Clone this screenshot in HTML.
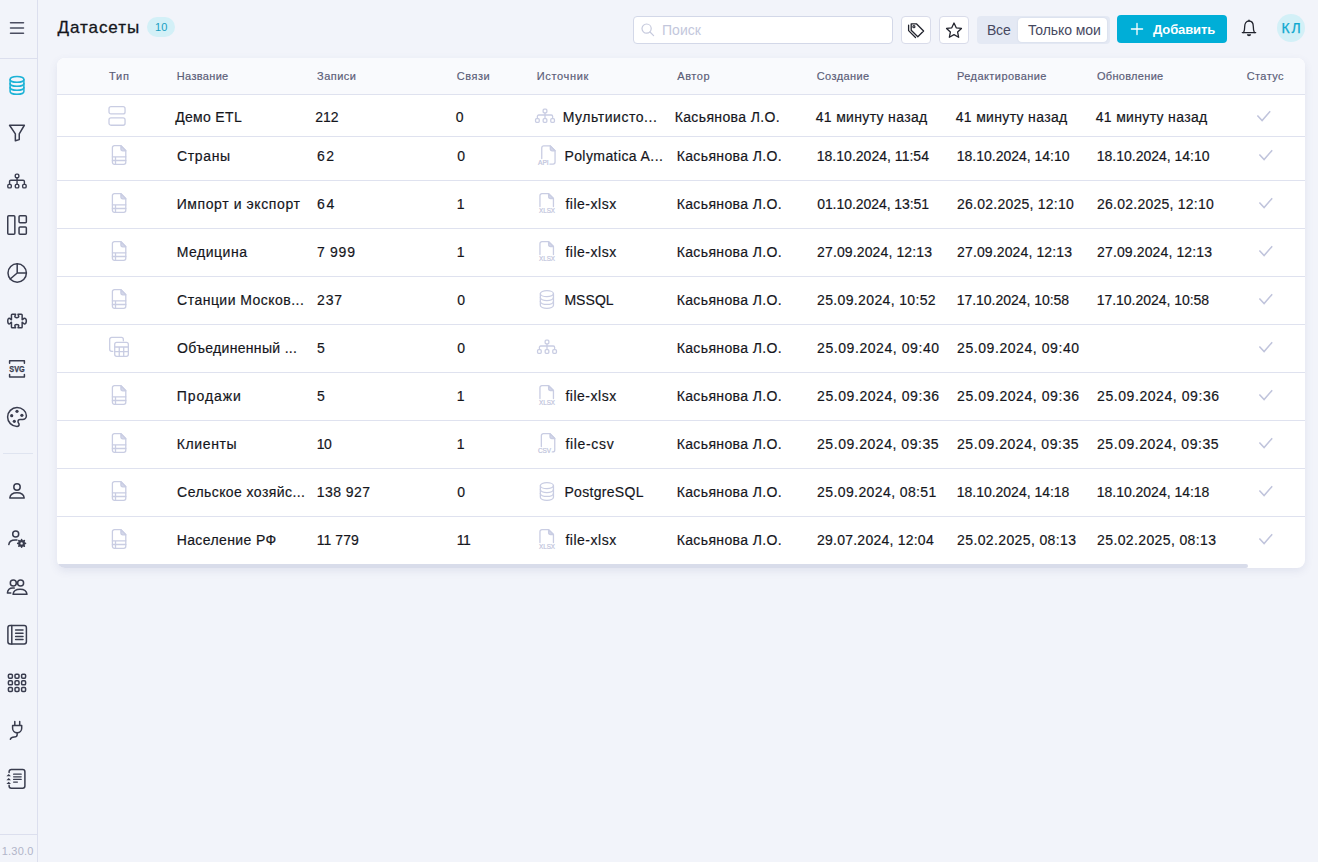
<!DOCTYPE html><html lang="ru"><head><meta charset="utf-8"><title>Датасеты</title><style>
*{box-sizing:border-box;margin:0;padding:0}
html,body{width:1318px;height:862px;overflow:hidden}
body{background:#f2f4fa;font-family:"Liberation Sans",sans-serif;color:#15161c;position:relative;font-size:14px}
.abs{position:absolute}
#side{position:absolute;left:0;top:0;width:38px;height:862px;border-right:1px solid #dcdfee;background:#f2f4fa}
#side .ln{position:absolute;height:1px;background:#dcdfee}
svg{position:absolute;overflow:visible}
.ic{fill:none;stroke:#393c4e;stroke-width:1.5;stroke-linecap:round;stroke-linejoin:round}
.x{position:absolute;white-space:nowrap;line-height:20px;height:20px}
#card .x{-webkit-text-stroke:0.18px currentColor}
.badge{position:absolute;left:147px;top:17px;width:28px;height:20px;border-radius:10px;background:#d3f0f7}
.search{position:absolute;left:633px;top:16px;width:260px;height:28px;border:1px solid #d3d8e8;border-radius:4px;background:#fff}
.btn{position:absolute;top:16px;width:30px;height:28px;border:1px solid #d9dcea;border-radius:4px;background:#fff}
.seg{position:absolute;left:977px;top:16px;width:133px;height:28px;border-radius:4px;background:#e4e9f4}
.seg .b{position:absolute;left:41px;top:2px;width:89px;height:24px;border-radius:4px;background:#fff;box-shadow:0 0 2px rgba(60,70,120,.12)}
.add{position:absolute;left:1117px;top:15px;width:110px;height:28px;border-radius:4px;background:#00aed7}
.ava{position:absolute;left:1277px;top:14px;width:28px;height:28px;border-radius:50%;background:#d3f0f7}
#card{position:absolute;left:57px;top:58px;width:1248px;height:510px;background:#fff;border-radius:8px;box-shadow:0 3px 8px rgba(80,95,150,.11);overflow:hidden}
#thead{position:absolute;left:0;top:0;width:100%;height:37px;background:#f9fafd;border-bottom:1px solid #dfe2ef}
.rl{position:absolute;left:0;width:100%;height:1px;background:#dfe2ef}
.li{fill:none;stroke:#c9cde3;stroke-width:1.3;stroke-linecap:round;stroke-linejoin:round}
.sb{position:absolute;left:0;top:506px;width:1191px;height:4px;background:#d8dcea;border-radius:0 2px 2px 4px}
</style></head><body>
<div id="side">
<div class="ln" style="left:0;top:58px;width:37px"></div>
<div class="ln" style="left:3px;top:453px;width:30px;background:#dfe4f0"></div>
<div class="ln" style="left:0;top:834px;width:37px"></div>
<svg style="left:7px;top:18px" width="20" height="20" viewBox="0 0 20 20"><path class="ic" style="stroke:#4a4d60" d="M3.5 4.7h13M3.5 10h13M3.5 15.3h13"/></svg>
<svg style="left:7px;top:75px" width="20" height="21" viewBox="0 0 20 21"><g class="ic" style="stroke:#1bb2d6"><ellipse cx="10" cy="4.400" rx="6.900" ry="2.900"/><path d="M3.100 4.400v12c0 1.600 3.100 2.900 6.900 2.900s6.900-1.300 6.900-2.900V4.400"/><path d="M3.100 8.400c0 1.600 3.100 2.900 6.900 2.900s6.900-1.300 6.900-2.900"/><path d="M3.100 12.400c0 1.600 3.100 2.900 6.900 2.900s6.900-1.300 6.900-2.900"/></g></svg>
<svg style="left:7px;top:123px" width="20" height="20" viewBox="0 0 20 20"><path class="ic" d="M2.550 2.250H17.350L12.250 10.800V16.600L8.350 17.800V10.800Z"/></svg>
<svg style="left:6px;top:171px" width="22" height="20" viewBox="0 0 22 20"><g class="ic" style="stroke-width:1.400"><rect x="9.250" y="3.100" width="3.600" height="3.600" rx="1.300"/><path d="M11.050 6.900v6M3.550 12.700V10.500a1.300 1.300 0 0 1 1.300-1.300H17.100a1.300 1.300 0 0 1 1.300 1.300V12.700"/><rect x="1.800" y="13.400" width="3.500" height="3.500" rx="1.200"/><rect x="9.300" y="13.400" width="3.500" height="3.500" rx="1.200"/><rect x="16.650" y="13.400" width="3.500" height="3.500" rx="1.200"/></g></svg>
<svg style="left:7px;top:215px" width="20" height="21" viewBox="0 0 20 21"><g class="ic"><rect x="0.750" y="0.850" width="7.100" height="18.300" rx="1"/><rect x="12.050" y="0.850" width="7.300" height="6.800" rx="1"/><rect x="12.050" y="12.050" width="7.300" height="7.100" rx="1"/></g></svg>
<svg style="left:7px;top:263px" width="20" height="20" viewBox="0 0 20 20"><g class="ic"><circle cx="10.2" cy="10" r="9.2"/><path d="M10.2 0.8V10H19.4M10.2 10L3.2 16"/></g></svg>
<svg style="left:6px;top:312px" width="22" height="18" viewBox="0 0 22 18"><path class="ic" d="M5.450 3.050a.8.8 0 0 1 .8-.8H9.600C9.600 3.200 8.850 3.400 8.850 4.300C8.850 5.200 9.700 5.700 10.800 5.700C11.900 5.700 12.750 5.200 12.750 4.300C12.750 3.400 12 3.200 12 2.250H15.350a.8.8 0 0 1 .8.800V7.750C17.100 7.750 17.300 6.150 18.300 6.150C19.500 6.150 20.350 7.400 20.350 9.050C20.350 10.700 19.500 11.950 18.300 11.950C17.300 11.950 17.100 10.350 16.150 10.350V15.050a.8.8 0 0 1-.8.800H12C12 14.900 12.750 14.700 12.750 13.800C12.750 12.900 11.900 12.400 10.800 12.400C9.700 12.400 8.850 12.900 8.850 13.800C8.850 14.700 9.600 14.900 9.600 15.850H6.250a.8.8 0 0 1-.8-.800V10.350C4.500 10.350 4.300 11.950 3.300 11.950C2.300 11.950 1.750 10.700 1.750 9.050C1.750 7.400 2.300 6.150 3.300 6.150C4.300 6.150 4.500 7.750 5.450 7.750Z"/></svg>
<svg style="left:7px;top:359px" width="20" height="20" viewBox="0 0 20 20"><path class="ic" d="M2.6 4.3V1.8h14.8v2.5M2.6 15.6v2.5h14.8v-2.5"/><text x="10" y="13.4" text-anchor="middle" font-family="Liberation Sans, sans-serif" font-weight="700" font-size="9.600" textLength="15.400" lengthAdjust="spacingAndGlyphs" fill="#393c4e" stroke="#393c4e" stroke-width="0.250">SVG</text></svg>
<svg style="left:6px;top:406px" width="22" height="22" viewBox="0 0 22 22"><path class="ic" d="M11 1.6c-5.2 0-9.4 4.2-9.4 9.4s4.2 9.4 9.4 9.4c1.4 0 2.1-.9 2.1-1.9 0-.6-.2-1-.6-1.500-.3-.4-.5-.9-.5-1.400 0-1.2.9-2.100 2.100-2.100h2.500c2.100 0 3.800-1.700 3.800-3.800C20.400 5.200 16.200 1.600 11 1.600z"/><g fill="#393c4e"><circle cx="5.700" cy="9.700" r="1.600"/><circle cx="11" cy="5.300" r="1.600"/><circle cx="15.900" cy="9.300" r="1.600"/><circle cx="8.300" cy="15.300" r="1.600"/></g></svg>
<svg style="left:7px;top:481px" width="20" height="20" viewBox="0 0 20 20"><g class="ic"><circle cx="10" cy="6" r="3.200"/><path d="M2.800 17c.400-3.300 3.300-5.200 7.200-5.200s6.800 1.900 7.200 5.200z"/></g></svg>
<svg style="left:7px;top:529px" width="20" height="20" viewBox="0 0 20 20"><g class="ic"><circle cx="8.700" cy="5" r="3"/><path d="M1.800 15.600c.300-3 2.800-4.700 6.400-4.700 .600 0 1.200.050 1.700.150"/><circle cx="14.600" cy="14.400" r="2.300" style="stroke-width:2.200"/><path style="stroke-width:1.600" d="M14.600 10.500v1M14.600 17.300v1M10.700 14.400h1M17.500 14.400h1M11.850 11.650l.7.700M16.650 16.450l.7.700M11.850 17.150l.7-.7M16.650 12.350l.7-.7"/></g></svg>
<svg style="left:6px;top:578px" width="22" height="18" viewBox="0 0 22 18"><g class="ic"><circle cx="7.300" cy="5" r="3"/><circle cx="14.600" cy="5" r="3"/><path d="M7 16.300c.400-3.200 3-5 7.100-5s6.500 1.800 6.900 5z"/><path d="M8.200 10.100c-.500-.100-1-.150-1.500-.150-3.200 0-5 1.800-5.300 5h3.400"/></g></svg>
<svg style="left:7px;top:624px" width="20" height="22" viewBox="0 0 20 22"><g class="ic"><rect x="0.900" y="1.500" width="18.500" height="18.500" rx="2.200"/><path d="M4.800 1.500v18.500M8.600 6h7.400M8.600 9.200h7.400M8.600 12.400h7.400M8.600 15.600h7.400"/></g></svg>
<svg style="left:7px;top:673px" width="20" height="20" viewBox="0 0 20 20"><g class="ic"><rect x="1.4" y="1.2" width="4" height="4" rx="1.100"/><rect x="8.0" y="1.2" width="4" height="4" rx="1.100"/><rect x="14.6" y="1.2" width="4" height="4" rx="1.100"/><rect x="1.4" y="7.8" width="4" height="4" rx="1.100"/><rect x="8.0" y="7.8" width="4" height="4" rx="1.100"/><rect x="14.6" y="7.8" width="4" height="4" rx="1.100"/><rect x="1.4" y="14.4" width="4" height="4" rx="1.100"/><rect x="8.0" y="14.4" width="4" height="4" rx="1.100"/><rect x="14.6" y="14.4" width="4" height="4" rx="1.100"/></g></svg>
<svg style="left:7px;top:718px" width="20" height="24" viewBox="0 0 20 24"><g class="ic"><path d="M7.800 3.600v3.600M12.700 3.600v3.600"/><path d="M5.600 7.500H14.700V10.300a4.550 4.550 0 0 1-9.100 0Z"/><path d="M10.150 14.850v1.800c0 1.700-1.300 2.300-3 2.300s-3.200.500-3.800 2.300"/></g></svg>
<svg style="left:6px;top:768px" width="22" height="22" viewBox="0 0 22 22"><g class="ic"><path d="M3.100 4.600V3.700a2.200 2.200 0 0 1 2.200-2.200H16.700a2.200 2.200 0 0 1 2.200 2.200V18.100a2.200 2.200 0 0 1-2.200 2.200H5.300a2.200 2.200 0 0 1-2.200-2.200V17.300"/><path style="stroke-width:1.250" d="M7.600 6.200h7.600M7.600 8.800h7.600M7.600 11.400h7.600M7.600 14h3.800"/></g><g fill="#393c4e"><path d="M0.400 8.300l2.300-2.300 2.300 2.300zM0.400 12.200l2.300-2.300 2.300 2.300zM0.400 16.100l2.300-2.300 2.300 2.300z"/></g></svg>
<div class="x" style="left:1.75px;top:841.19px;font-size:11px;color:#b1b5c9;letter-spacing:0.196px">1.30.0</div>
</div>
<div class="x" style="left:57.44px;top:17.61px;font-size:17px;color:#15161c;letter-spacing:0.956px;-webkit-text-stroke:0.3px #15161c">Датасеты</div>
<div class="badge"></div>
<div class="x" style="left:155.02px;top:16.99px;font-size:11px;color:#1a9fc2;letter-spacing:0.051px">10</div>
<div class="search"><svg style="left:7.2px;top:6.2px" width="14" height="14" viewBox="0 0 14 14"><circle cx="5.6" cy="5.6" r="4.6" fill="none" stroke="#c6cadd" stroke-width="1.2"/><path d="M9 9L12.6 12.6" stroke="#c6cadd" stroke-width="1.2" stroke-linecap="round"/></svg></div>
<div class="x" style="left:662.00px;top:20.15px;font-size:14px;color:#c3c7dc;letter-spacing:0.036px">Поиск</div>
<div class="btn" style="left:901px"><svg style="left:3.8px;top:4px" width="20" height="20" viewBox="0 0 20 20"><g fill="none" stroke="#22242e" stroke-width="1.300" stroke-linejoin="round" stroke-linecap="round"><path d="M5.200 2.800h5.200l7.200 7.200-5.800 5.800-6.600-6.600z"/><path d="M2.600 4.200v5.400l6.900 6.900"/><circle cx="7.900" cy="5.700" r="1.050" stroke-width="1.100"/></g></svg></div>
<div class="btn" style="left:939px"><svg style="left:4px;top:3px" width="20" height="20" viewBox="0 0 20 20"><path transform="translate(10 10.500) scale(.93) translate(-10 -10.300)" d="M10 2.200l2.400 5.200 5.600.700-4.100 3.900 1.100 5.600-5-2.800-5 2.800 1.100-5.600-4.100-3.900 5.600-.700z" fill="none" stroke="#22242e" stroke-width="1.400" stroke-linejoin="round"/></svg></div>
<div class="seg"><div class="b"></div></div>
<div class="x" style="left:987.00px;top:20.15px;font-size:14px;color:#46485f;letter-spacing:-0.220px">Все</div>
<div class="x" style="left:1027.90px;top:20.15px;font-size:14px;color:#46485f;letter-spacing:-0.074px">Только мои</div>
<div class="add"><svg style="left:14px;top:8px" width="12" height="12" viewBox="0 0 12 12"><path d="M6 0.4v11.2M0.4 6h11.2" stroke="#fff" stroke-width="1.3" stroke-linecap="round"/></svg></div>
<div class="x" style="left:1153.06px;top:19.50px;font-size:13px;color:#ffffff;letter-spacing:-0.118px;font-weight:700">Добавить</div>
<svg style="left:1239px;top:18px" width="20" height="20" viewBox="0 0 20 20"><g fill="none" stroke="#22242e" stroke-width="1.300" stroke-linecap="round" stroke-linejoin="round"><path d="M4.600 14.600c.900-2 1.100-4 1.100-6.200c0-3 1.600-5.400 4.300-5.400s4.300 2.400 4.300 5.400c0 2.200.200 4.200 1.100 6.200"/><path d="M3.300 14.600H16.700M10 2.100v.800"/></g><path d="M7.900 16.300h4.200a2.100 1.900 0 0 1-4.200 0z" fill="#22242e"/></svg>
<div class="ava"></div>
<div class="x" style="left:1281.38px;top:18.15px;font-size:14px;color:#0da8cf;letter-spacing:1.922px;-webkit-text-stroke:0.25px #0da8cf">КЛ</div>
<div id="card"><div id="thead"></div>
<div class="x" style="left:52.08px;top:8.29px;font-size:11px;color:#5b5d78;letter-spacing:0.733px">Тип</div>
<div class="x" style="left:119.86px;top:8.29px;font-size:11px;color:#5b5d78;letter-spacing:0.316px">Название</div>
<div class="x" style="left:260.11px;top:8.29px;font-size:11px;color:#5b5d78;letter-spacing:0.437px">Записи</div>
<div class="x" style="left:399.86px;top:8.29px;font-size:11px;color:#5b5d78;letter-spacing:0.519px">Связи</div>
<div class="x" style="left:479.77px;top:8.29px;font-size:11px;color:#5b5d78;letter-spacing:0.665px">Источник</div>
<div class="x" style="left:620.27px;top:8.29px;font-size:11px;color:#5b5d78;letter-spacing:0.542px">Автор</div>
<div class="x" style="left:759.78px;top:8.29px;font-size:11px;color:#5b5d78;letter-spacing:0.406px">Создание</div>
<div class="x" style="left:899.91px;top:8.29px;font-size:11px;color:#5b5d78;letter-spacing:0.443px">Редактирование</div>
<div class="x" style="left:1039.92px;top:8.29px;font-size:11px;color:#5b5d78;letter-spacing:0.311px">Обновление</div>
<div class="x" style="left:1189.64px;top:8.29px;font-size:11px;color:#5b5d78;letter-spacing:0.430px">Статус</div>
<div class="rl" style="top:78px"></div>
<div class="rl" style="top:122px"></div>
<div class="rl" style="top:170px"></div>
<div class="rl" style="top:218px"></div>
<div class="rl" style="top:266px"></div>
<div class="rl" style="top:314px"></div>
<div class="rl" style="top:362px"></div>
<div class="rl" style="top:410px"></div>
<div class="rl" style="top:458px"></div>
<svg style="left:51px;top:47px" width="18" height="22" viewBox="0 0 18 22"><g class="li"><rect x="1" y="1.65" width="16.05" height="7.3" rx="2"/><rect x="1" y="12.85" width="16.05" height="7.4" rx="2"/></g></svg>
<div class="x" style="left:118.14px;top:49.05px;font-size:14px;color:#15161c;letter-spacing:0.329px">Демо ETL</div>
<div class="x" style="left:258.36px;top:49.05px;font-size:14px;color:#15161c;letter-spacing:-0.149px">212</div>
<div class="x" style="left:398.63px;top:49.05px;font-size:14px;color:#15161c;letter-spacing:0.000px">0</div>
<div class="x" style="left:505.70px;top:49.05px;font-size:14px;color:#15161c;letter-spacing:0.543px">Мультиисто...</div>
<div class="x" style="left:617.68px;top:49.05px;font-size:14px;color:#15161c;letter-spacing:0.369px">Касьянова Л.О.</div>
<div class="x" style="left:758.67px;top:49.05px;font-size:14px;color:#15161c;letter-spacing:0.337px">41 минуту назад</div>
<div class="x" style="left:898.67px;top:49.05px;font-size:14px;color:#15161c;letter-spacing:0.337px">41 минуту назад</div>
<div class="x" style="left:1038.67px;top:49.05px;font-size:14px;color:#15161c;letter-spacing:0.337px">41 минуту назад</div>
<svg style="left:477px;top:50px" width="22" height="18" viewBox="0 0 22 18"><g class="li"><rect x="9.15" y="1.15" width="3.7" height="3.7" rx="1"/><path d="M11 5v5M3.4 9.6V8.3a1.3 1.3 0 0 1 1.300-1.300h12.600a1.300 1.300 0 0 1 1.300 1.300v1.300"/><rect x="1.550" y="10.650" width="3.700" height="3.700" rx="1"/><rect x="9.150" y="10.650" width="3.700" height="3.700" rx="1"/><rect x="16.750" y="10.650" width="3.700" height="3.700" rx="1"/></g></svg>
<svg style="left:1197px;top:51px" width="18" height="14" viewBox="0 0 18 14"><path d="M3.400 6.400L8.100 11.600L16.200 2.200" fill="none" stroke="#c0c4dc" stroke-width="1.500" stroke-linejoin="miter"/></svg>
<svg style="left:54px;top:87px" width="16" height="20" viewBox="0 0 16 20"><path class="li" d="M3.4 0.6h6.5l4.9 5.2v11.5a2 2 0 0 1-2 2h-9.4a2 2 0 0 1-2-2v-14.7a2 2 0 0 1 2-2z"/><path class="li" style="fill:#d5d8ea" d="M9.9 0.6v3.2a2 2 0 0 0 2 2h2.9z"/><path class="li" d="M1.4 11.8h13.4M1.4 15.5h13.4M4.5 11.8v7.5"/></svg>
<div class="x" style="left:120.11px;top:88.05px;font-size:14px;color:#15161c;letter-spacing:0.607px">Страны</div>
<div class="x" style="left:260.11px;top:88.05px;font-size:14px;color:#15161c;letter-spacing:1.451px">62</div>
<div class="x" style="left:400.16px;top:88.05px;font-size:14px;color:#15161c;letter-spacing:0.000px">0</div>
<div class="x" style="left:507.41px;top:88.05px;font-size:14px;color:#15161c;letter-spacing:0.420px">Polymatica A...</div>
<div class="x" style="left:619.68px;top:88.05px;font-size:14px;color:#15161c;letter-spacing:0.369px">Касьянова Л.О.</div>
<div class="x" style="left:759.75px;top:88.05px;font-size:14px;color:#15161c;letter-spacing:0.023px">18.10.2024, 11:54</div>
<div class="x" style="left:899.75px;top:88.05px;font-size:14px;color:#15161c;letter-spacing:-0.008px">18.10.2024, 14:10</div>
<div class="x" style="left:1039.75px;top:88.05px;font-size:14px;color:#15161c;letter-spacing:-0.008px">18.10.2024, 14:10</div>
<svg style="left:481px;top:86px" width="18" height="22" viewBox="0 0 18 22"><path class="li" d="M3.750 14.500V3.950a2 2 0 0 1 2-2H12.300L17.050 6.800V18.050a2 2 0 0 1-2 2H11.900"/><path class="li" style="fill:#d5d8ea" d="M12.300 1.950V4.800a2 2 0 0 0 2 2H17.050z"/><text x="0.100" y="20.700" textLength="10.600" font-family="Liberation Sans, sans-serif" font-size="6.3" fill="#c0c4dc" stroke="#c0c4dc" stroke-width="0.2" lengthAdjust="spacingAndGlyphs">API</text></svg>
<svg style="left:1199px;top:90px" width="18" height="14" viewBox="0 0 18 14"><path d="M3.400 6.400L8.100 11.600L16.200 2.200" fill="none" stroke="#c0c4dc" stroke-width="1.500" stroke-linejoin="miter"/></svg>
<svg style="left:54px;top:135px" width="16" height="20" viewBox="0 0 16 20"><path class="li" d="M3.4 0.6h6.5l4.9 5.2v11.5a2 2 0 0 1-2 2h-9.4a2 2 0 0 1-2-2v-14.7a2 2 0 0 1 2-2z"/><path class="li" style="fill:#d5d8ea" d="M9.9 0.6v3.2a2 2 0 0 0 2 2h2.9z"/><path class="li" d="M1.4 11.8h13.4M1.4 15.5h13.4M4.5 11.8v7.5"/></svg>
<div class="x" style="left:119.68px;top:136.05px;font-size:14px;color:#15161c;letter-spacing:0.599px">Импорт и экспорт</div>
<div class="x" style="left:260.11px;top:136.05px;font-size:14px;color:#15161c;letter-spacing:1.682px">64</div>
<div class="x" style="left:399.75px;top:136.05px;font-size:14px;color:#15161c;letter-spacing:0.000px">1</div>
<div class="x" style="left:508.39px;top:136.05px;font-size:14px;color:#15161c;letter-spacing:0.525px">file-xlsx</div>
<div class="x" style="left:619.68px;top:136.05px;font-size:14px;color:#15161c;letter-spacing:0.369px">Касьянова Л.О.</div>
<div class="x" style="left:760.16px;top:136.05px;font-size:14px;color:#15161c;letter-spacing:-0.059px">01.10.2024, 13:51</div>
<div class="x" style="left:900.05px;top:136.05px;font-size:14px;color:#15161c;letter-spacing:0.241px">26.02.2025, 12:10</div>
<div class="x" style="left:1040.05px;top:136.05px;font-size:14px;color:#15161c;letter-spacing:0.241px">26.02.2025, 12:10</div>
<svg style="left:481px;top:134px" width="18" height="22" viewBox="0 0 18 22"><path class="li" d="M1.950 14.600V3.650a2 2 0 0 1 2-2H10.600L15.450 6.500V14.600"/><path class="li" style="fill:#d5d8ea" d="M10.600 1.650V4.500a2 2 0 0 0 2 2H15.450z"/><text x="1" y="20.800" textLength="16" font-family="Liberation Sans, sans-serif" font-size="6.3" fill="#c0c4dc" stroke="#c0c4dc" stroke-width="0.2" lengthAdjust="spacingAndGlyphs">XLSX</text></svg>
<svg style="left:1199px;top:138px" width="18" height="14" viewBox="0 0 18 14"><path d="M3.400 6.400L8.100 11.600L16.200 2.200" fill="none" stroke="#c0c4dc" stroke-width="1.500" stroke-linejoin="miter"/></svg>
<svg style="left:54px;top:183px" width="16" height="20" viewBox="0 0 16 20"><path class="li" d="M3.4 0.6h6.5l4.9 5.2v11.5a2 2 0 0 1-2 2h-9.4a2 2 0 0 1-2-2v-14.7a2 2 0 0 1 2-2z"/><path class="li" style="fill:#d5d8ea" d="M9.9 0.6v3.2a2 2 0 0 0 2 2h2.9z"/><path class="li" d="M1.4 11.8h13.4M1.4 15.5h13.4M4.5 11.8v7.5"/></svg>
<div class="x" style="left:119.68px;top:184.05px;font-size:14px;color:#15161c;letter-spacing:0.518px">Медицина</div>
<div class="x" style="left:260.00px;top:184.05px;font-size:14px;color:#15161c;letter-spacing:0.720px">7 999</div>
<div class="x" style="left:399.75px;top:184.05px;font-size:14px;color:#15161c;letter-spacing:0.000px">1</div>
<div class="x" style="left:508.39px;top:184.05px;font-size:14px;color:#15161c;letter-spacing:0.525px">file-xlsx</div>
<div class="x" style="left:619.68px;top:184.05px;font-size:14px;color:#15161c;letter-spacing:0.369px">Касьянова Л.О.</div>
<div class="x" style="left:760.05px;top:184.05px;font-size:14px;color:#15161c;letter-spacing:0.130px">27.09.2024, 12:13</div>
<div class="x" style="left:900.05px;top:184.05px;font-size:14px;color:#15161c;letter-spacing:0.130px">27.09.2024, 12:13</div>
<div class="x" style="left:1040.05px;top:184.05px;font-size:14px;color:#15161c;letter-spacing:0.130px">27.09.2024, 12:13</div>
<svg style="left:481px;top:182px" width="18" height="22" viewBox="0 0 18 22"><path class="li" d="M1.950 14.600V3.650a2 2 0 0 1 2-2H10.600L15.450 6.500V14.600"/><path class="li" style="fill:#d5d8ea" d="M10.600 1.650V4.500a2 2 0 0 0 2 2H15.450z"/><text x="1" y="20.800" textLength="16" font-family="Liberation Sans, sans-serif" font-size="6.3" fill="#c0c4dc" stroke="#c0c4dc" stroke-width="0.2" lengthAdjust="spacingAndGlyphs">XLSX</text></svg>
<svg style="left:1199px;top:186px" width="18" height="14" viewBox="0 0 18 14"><path d="M3.400 6.400L8.100 11.600L16.200 2.200" fill="none" stroke="#c0c4dc" stroke-width="1.500" stroke-linejoin="miter"/></svg>
<svg style="left:54px;top:231px" width="16" height="20" viewBox="0 0 16 20"><path class="li" d="M3.4 0.6h6.5l4.9 5.2v11.5a2 2 0 0 1-2 2h-9.4a2 2 0 0 1-2-2v-14.7a2 2 0 0 1 2-2z"/><path class="li" style="fill:#d5d8ea" d="M9.9 0.6v3.2a2 2 0 0 0 2 2h2.9z"/><path class="li" d="M1.4 11.8h13.4M1.4 15.5h13.4M4.5 11.8v7.5"/></svg>
<div class="x" style="left:120.11px;top:232.05px;font-size:14px;color:#15161c;letter-spacing:0.471px">Станции Москов...</div>
<div class="x" style="left:260.05px;top:232.05px;font-size:14px;color:#15161c;letter-spacing:0.862px">237</div>
<div class="x" style="left:400.16px;top:232.05px;font-size:14px;color:#15161c;letter-spacing:0.000px">0</div>
<div class="x" style="left:507.41px;top:232.05px;font-size:14px;color:#15161c;letter-spacing:0.046px">MSSQL</div>
<div class="x" style="left:619.68px;top:232.05px;font-size:14px;color:#15161c;letter-spacing:0.369px">Касьянова Л.О.</div>
<div class="x" style="left:760.05px;top:232.05px;font-size:14px;color:#15161c;letter-spacing:0.357px">25.09.2024, 10:52</div>
<div class="x" style="left:899.75px;top:232.05px;font-size:14px;color:#15161c;letter-spacing:-0.037px">17.10.2024, 10:58</div>
<div class="x" style="left:1039.75px;top:232.05px;font-size:14px;color:#15161c;letter-spacing:-0.037px">17.10.2024, 10:58</div>
<svg style="left:481px;top:230px" width="18" height="24" viewBox="0 0 18 24"><g class="li"><ellipse cx="8.900" cy="5.650" rx="6.550" ry="3"/><path d="M2.350 5.650V17.350c0 1.660 2.930 3 6.550 3s6.550-1.340 6.550-3V5.650"/><path d="M2.350 9.550c0 1.660 2.930 3 6.550 3s6.550-1.340 6.550-3"/><path d="M2.350 13.450c0 1.660 2.930 3 6.550 3s6.550-1.340 6.550-3"/></g></svg>
<svg style="left:1199px;top:234px" width="18" height="14" viewBox="0 0 18 14"><path d="M3.400 6.400L8.100 11.600L16.200 2.200" fill="none" stroke="#c0c4dc" stroke-width="1.500" stroke-linejoin="miter"/></svg>
<svg style="left:51px;top:278px" width="22" height="22" viewBox="0 0 22 22"><g class="li"><path d="M4.8 15.35H3.7a2 2 0 0 1-2-2V3.45a2 2 0 0 1 2-2h9.65a2 2 0 0 1 2 2V4.8"/><rect x="6.7" y="6.45" width="13.65" height="13.9" rx="2"/><path d="M6.7 11H20.35M6.7 15.7H20.35M11.26 11v9.35M15.7 11v9.35"/></g></svg>
<div class="x" style="left:120.09px;top:280.05px;font-size:14px;color:#15161c;letter-spacing:0.320px">Объединенный ...</div>
<div class="x" style="left:259.88px;top:280.05px;font-size:14px;color:#15161c;letter-spacing:0.000px">5</div>
<div class="x" style="left:400.16px;top:280.05px;font-size:14px;color:#15161c;letter-spacing:0.000px">0</div>
<div class="x" style="left:619.68px;top:280.05px;font-size:14px;color:#15161c;letter-spacing:0.369px">Касьянова Л.О.</div>
<div class="x" style="left:760.05px;top:280.05px;font-size:14px;color:#15161c;letter-spacing:0.568px">25.09.2024, 09:40</div>
<div class="x" style="left:900.05px;top:280.05px;font-size:14px;color:#15161c;letter-spacing:0.568px">25.09.2024, 09:40</div>
<svg style="left:479px;top:281px" width="22" height="18" viewBox="0 0 22 18"><g class="li"><rect x="9.15" y="1.15" width="3.7" height="3.7" rx="1"/><path d="M11 5v5M3.4 9.6V8.3a1.3 1.3 0 0 1 1.300-1.300h12.600a1.300 1.300 0 0 1 1.300 1.300v1.300"/><rect x="1.550" y="10.650" width="3.700" height="3.700" rx="1"/><rect x="9.150" y="10.650" width="3.700" height="3.700" rx="1"/><rect x="16.750" y="10.650" width="3.700" height="3.700" rx="1"/></g></svg>
<svg style="left:1199px;top:282px" width="18" height="14" viewBox="0 0 18 14"><path d="M3.400 6.400L8.100 11.600L16.200 2.200" fill="none" stroke="#c0c4dc" stroke-width="1.500" stroke-linejoin="miter"/></svg>
<svg style="left:54px;top:327px" width="16" height="20" viewBox="0 0 16 20"><path class="li" d="M3.4 0.6h6.5l4.9 5.2v11.5a2 2 0 0 1-2 2h-9.4a2 2 0 0 1-2-2v-14.7a2 2 0 0 1 2-2z"/><path class="li" style="fill:#d5d8ea" d="M9.9 0.6v3.2a2 2 0 0 0 2 2h2.9z"/><path class="li" d="M1.4 11.8h13.4M1.4 15.5h13.4M4.5 11.8v7.5"/></svg>
<div class="x" style="left:119.70px;top:328.05px;font-size:14px;color:#15161c;letter-spacing:0.959px">Продажи</div>
<div class="x" style="left:259.88px;top:328.05px;font-size:14px;color:#15161c;letter-spacing:0.000px">5</div>
<div class="x" style="left:399.75px;top:328.05px;font-size:14px;color:#15161c;letter-spacing:0.000px">1</div>
<div class="x" style="left:508.39px;top:328.05px;font-size:14px;color:#15161c;letter-spacing:0.525px">file-xlsx</div>
<div class="x" style="left:619.68px;top:328.05px;font-size:14px;color:#15161c;letter-spacing:0.369px">Касьянова Л.О.</div>
<div class="x" style="left:760.05px;top:328.05px;font-size:14px;color:#15161c;letter-spacing:0.568px">25.09.2024, 09:36</div>
<div class="x" style="left:900.05px;top:328.05px;font-size:14px;color:#15161c;letter-spacing:0.568px">25.09.2024, 09:36</div>
<div class="x" style="left:1040.05px;top:328.05px;font-size:14px;color:#15161c;letter-spacing:0.568px">25.09.2024, 09:36</div>
<svg style="left:481px;top:326px" width="18" height="22" viewBox="0 0 18 22"><path class="li" d="M1.950 14.600V3.650a2 2 0 0 1 2-2H10.600L15.450 6.500V14.600"/><path class="li" style="fill:#d5d8ea" d="M10.600 1.650V4.500a2 2 0 0 0 2 2H15.450z"/><text x="1" y="20.800" textLength="16" font-family="Liberation Sans, sans-serif" font-size="6.3" fill="#c0c4dc" stroke="#c0c4dc" stroke-width="0.2" lengthAdjust="spacingAndGlyphs">XLSX</text></svg>
<svg style="left:1199px;top:330px" width="18" height="14" viewBox="0 0 18 14"><path d="M3.400 6.400L8.100 11.600L16.200 2.200" fill="none" stroke="#c0c4dc" stroke-width="1.500" stroke-linejoin="miter"/></svg>
<svg style="left:54px;top:375px" width="16" height="20" viewBox="0 0 16 20"><path class="li" d="M3.4 0.6h6.5l4.9 5.2v11.5a2 2 0 0 1-2 2h-9.4a2 2 0 0 1-2-2v-14.7a2 2 0 0 1 2-2z"/><path class="li" style="fill:#d5d8ea" d="M9.9 0.6v3.2a2 2 0 0 0 2 2h2.9z"/><path class="li" d="M1.4 11.8h13.4M1.4 15.5h13.4M4.5 11.8v7.5"/></svg>
<div class="x" style="left:119.68px;top:376.05px;font-size:14px;color:#15161c;letter-spacing:0.641px">Клиенты</div>
<div class="x" style="left:259.75px;top:376.05px;font-size:14px;color:#15161c;letter-spacing:-0.550px">10</div>
<div class="x" style="left:399.75px;top:376.05px;font-size:14px;color:#15161c;letter-spacing:0.000px">1</div>
<div class="x" style="left:508.39px;top:376.05px;font-size:14px;color:#15161c;letter-spacing:0.684px">file-csv</div>
<div class="x" style="left:619.68px;top:376.05px;font-size:14px;color:#15161c;letter-spacing:0.369px">Касьянова Л.О.</div>
<div class="x" style="left:760.05px;top:376.05px;font-size:14px;color:#15161c;letter-spacing:0.540px">25.09.2024, 09:35</div>
<div class="x" style="left:900.05px;top:376.05px;font-size:14px;color:#15161c;letter-spacing:0.540px">25.09.2024, 09:35</div>
<div class="x" style="left:1040.05px;top:376.05px;font-size:14px;color:#15161c;letter-spacing:0.540px">25.09.2024, 09:35</div>
<svg style="left:481px;top:374px" width="18" height="22" viewBox="0 0 18 22"><path class="li" d="M3.350 14.600V3.650a2 2 0 0 1 2-2H12L16.750 6.500V17.950a2 2 0 0 1-2 2H14.300"/><path class="li" style="fill:#d5d8ea" d="M12 1.650V4.500a2 2 0 0 0 2 2H16.750z"/><text x="-0.100" y="20.800" textLength="13.200" font-family="Liberation Sans, sans-serif" font-size="6.3" fill="#c0c4dc" stroke="#c0c4dc" stroke-width="0.2" lengthAdjust="spacingAndGlyphs">CSV</text></svg>
<svg style="left:1199px;top:378px" width="18" height="14" viewBox="0 0 18 14"><path d="M3.400 6.400L8.100 11.600L16.200 2.200" fill="none" stroke="#c0c4dc" stroke-width="1.500" stroke-linejoin="miter"/></svg>
<svg style="left:54px;top:423px" width="16" height="20" viewBox="0 0 16 20"><path class="li" d="M3.4 0.6h6.5l4.9 5.2v11.5a2 2 0 0 1-2 2h-9.4a2 2 0 0 1-2-2v-14.7a2 2 0 0 1 2-2z"/><path class="li" style="fill:#d5d8ea" d="M9.9 0.6v3.2a2 2 0 0 0 2 2h2.9z"/><path class="li" d="M1.4 11.8h13.4M1.4 15.5h13.4M4.5 11.8v7.5"/></svg>
<div class="x" style="left:120.11px;top:424.05px;font-size:14px;color:#15161c;letter-spacing:0.428px">Сельское хозяйс...</div>
<div class="x" style="left:259.75px;top:424.05px;font-size:14px;color:#15161c;letter-spacing:0.435px">138 927</div>
<div class="x" style="left:400.16px;top:424.05px;font-size:14px;color:#15161c;letter-spacing:0.000px">0</div>
<div class="x" style="left:507.41px;top:424.05px;font-size:14px;color:#15161c;letter-spacing:0.309px">PostgreSQL</div>
<div class="x" style="left:619.68px;top:424.05px;font-size:14px;color:#15161c;letter-spacing:0.369px">Касьянова Л.О.</div>
<div class="x" style="left:760.05px;top:424.05px;font-size:14px;color:#15161c;letter-spacing:0.401px">25.09.2024, 08:51</div>
<div class="x" style="left:899.75px;top:424.05px;font-size:14px;color:#15161c;letter-spacing:-0.017px">18.10.2024, 14:18</div>
<div class="x" style="left:1039.75px;top:424.05px;font-size:14px;color:#15161c;letter-spacing:-0.017px">18.10.2024, 14:18</div>
<svg style="left:481px;top:422px" width="18" height="24" viewBox="0 0 18 24"><g class="li"><ellipse cx="8.900" cy="5.650" rx="6.550" ry="3"/><path d="M2.350 5.650V17.350c0 1.660 2.930 3 6.550 3s6.550-1.340 6.550-3V5.650"/><path d="M2.350 9.550c0 1.660 2.930 3 6.550 3s6.550-1.340 6.550-3"/><path d="M2.350 13.450c0 1.660 2.930 3 6.550 3s6.550-1.340 6.550-3"/></g></svg>
<svg style="left:1199px;top:426px" width="18" height="14" viewBox="0 0 18 14"><path d="M3.400 6.400L8.100 11.600L16.200 2.200" fill="none" stroke="#c0c4dc" stroke-width="1.500" stroke-linejoin="miter"/></svg>
<svg style="left:54px;top:471px" width="16" height="20" viewBox="0 0 16 20"><path class="li" d="M3.4 0.6h6.5l4.9 5.2v11.5a2 2 0 0 1-2 2h-9.4a2 2 0 0 1-2-2v-14.7a2 2 0 0 1 2-2z"/><path class="li" style="fill:#d5d8ea" d="M9.9 0.6v3.2a2 2 0 0 0 2 2h2.9z"/><path class="li" d="M1.4 11.8h13.4M1.4 15.5h13.4M4.5 11.8v7.5"/></svg>
<div class="x" style="left:119.68px;top:472.05px;font-size:14px;color:#15161c;letter-spacing:0.381px">Население РФ</div>
<div class="x" style="left:259.75px;top:472.05px;font-size:14px;color:#15161c;letter-spacing:0.045px">11 779</div>
<div class="x" style="left:399.75px;top:472.05px;font-size:14px;color:#15161c;letter-spacing:-0.550px">11</div>
<div class="x" style="left:508.39px;top:472.05px;font-size:14px;color:#15161c;letter-spacing:0.525px">file-xlsx</div>
<div class="x" style="left:619.68px;top:472.05px;font-size:14px;color:#15161c;letter-spacing:0.369px">Касьянова Л.О.</div>
<div class="x" style="left:760.05px;top:472.05px;font-size:14px;color:#15161c;letter-spacing:0.234px">29.07.2024, 12:04</div>
<div class="x" style="left:900.05px;top:472.05px;font-size:14px;color:#15161c;letter-spacing:0.380px">25.02.2025, 08:13</div>
<div class="x" style="left:1040.05px;top:472.05px;font-size:14px;color:#15161c;letter-spacing:0.380px">25.02.2025, 08:13</div>
<svg style="left:481px;top:470px" width="18" height="22" viewBox="0 0 18 22"><path class="li" d="M1.950 14.600V3.650a2 2 0 0 1 2-2H10.600L15.450 6.500V14.600"/><path class="li" style="fill:#d5d8ea" d="M10.600 1.650V4.500a2 2 0 0 0 2 2H15.450z"/><text x="1" y="20.800" textLength="16" font-family="Liberation Sans, sans-serif" font-size="6.3" fill="#c0c4dc" stroke="#c0c4dc" stroke-width="0.2" lengthAdjust="spacingAndGlyphs">XLSX</text></svg>
<svg style="left:1199px;top:474px" width="18" height="14" viewBox="0 0 18 14"><path d="M3.400 6.400L8.100 11.600L16.200 2.200" fill="none" stroke="#c0c4dc" stroke-width="1.500" stroke-linejoin="miter"/></svg>
<div class="sb"></div>
</div>
</body></html>
